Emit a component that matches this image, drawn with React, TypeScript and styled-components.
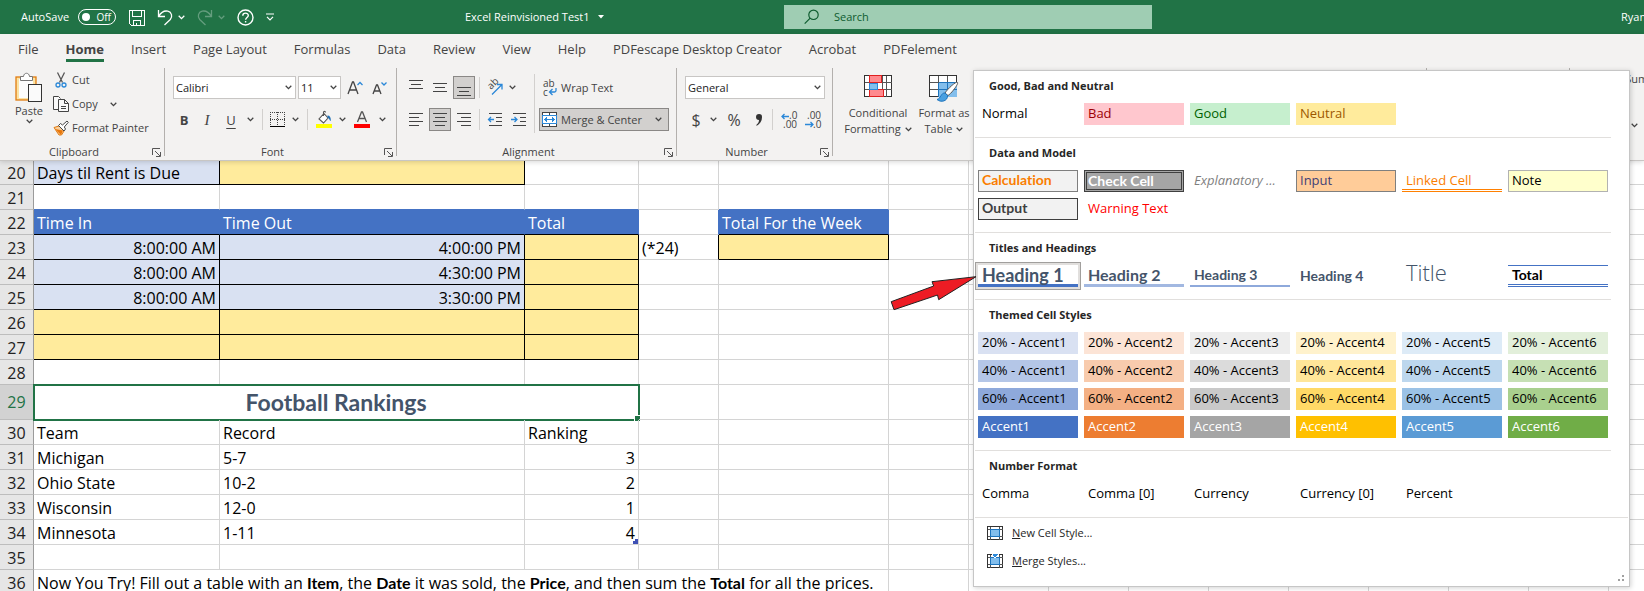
import React from 'react';
import styled, { createGlobalStyle, css } from 'styled-components';

const UI = "'Open Sans', 'Noto Sans', sans-serif";
const STRONG = "Lato, 'Open Sans', sans-serif";
const GREEN = '#217346';
const INK = '#444444';
const BLUE = '#2b88d8';

const GlobalStyle = createGlobalStyle`
  *, *::before, *::after { box-sizing: border-box; }
  body { margin: 0; overflow: hidden; background: #fff; }
  button { font: inherit; color: inherit; background: none; border: 0; padding: 0; margin: 0; }
  svg { flex: none; overflow: visible; }
`;

const Workbook = styled.div`
  position: relative;
  display: flex;
  flex-direction: column;
  height: 100vh;
  overflow: hidden;
  font: 11px/16px ${UI};
  color: ${INK};
`;

/* ---------- title bar ---------- */

const TitleBar = styled.header`
  display: grid;
  grid-template-columns: 465fr 319fr 368fr 492fr;
  align-items: center;
  height: 34px;
  background: ${GREEN};
  color: #fff;
`;

const QuickAccess = styled.div`
  display: flex;
  align-items: center;
  gap: 12px;
  padding-left: 21px;
`;

const AutoSave = styled.label`
  display: flex;
  align-items: center;
  width: 95px;
  justify-content: space-between;
`;

const Switch = styled.span`
  position: relative;
  display: flex;
  width: 38px;
  height: 16px;
`;

const SwitchInput = styled.input`
  appearance: none;
  margin: 0;
  width: 38px;
  height: 16px;
  border: 1px solid #fff;
  border-radius: 8px;
  &::before {
    content: '';
    display: block;
    width: 8px;
    height: 8px;
    margin: 3px;
    border-radius: 50%;
    background: #fff;
  }
`;

const SwitchState = styled.span`
  position: absolute;
  right: 5px;
  top: 0;
  font-size: 10px;
`;

const IconButton = styled.button<{ $dim?: boolean }>`
  display: flex;
  align-items: center;
  gap: 5px;
  opacity: ${(p) => (p.$dim ? 0.3 : 1)};
`;

const DocTitle = styled.button`
  display: flex;
  align-items: center;
  gap: 8px;
`;

const SearchBox = styled.label`
  display: flex;
  align-items: center;
  gap: 14px;
  height: 24px;
  padding-left: 20px;
  background: #9fcdb3;
  color: #0e5c2f;
`;

const SearchInput = styled.input`
  flex: 1;
  min-width: 0;
  border: 0;
  padding: 0;
  background: none;
  font: 11px/16px ${UI};
  &::placeholder { color: #0e5c2f; opacity: 1; }
`;

const Account = styled.button`
  justify-self: end;
  width: 23px;
  overflow: hidden;
  text-align: left;
`;

/* ---------- ribbon ---------- */

const Ribbon = styled.section`
  position: relative;
  z-index: 1;
  background: #f3f2f1;
  border-bottom: 1px solid #c8c6c4;
  box-shadow: 0 1px 5px rgba(0, 0, 0, 0.16);
`;

const Tabs = styled.nav`
  display: flex;
  align-items: flex-start;
  gap: 27px;
  height: 34px;
  padding-left: 18px;
`;

const Tab = styled.button<{ $active?: boolean }>`
  height: 28px;
  padding-top: 6px;
  line-height: 19px;
  white-space: nowrap;
  font-size: 13px;
  font-weight: ${(p) => (p.$active ? 700 : 400)};
  border-bottom: 3px solid ${(p) => (p.$active ? GREEN : 'transparent')};
`;

const Groups = styled.div`
  display: flex;
  height: 92px;
`;

const Group = styled.div<{ $width?: number }>`
  display: flex;
  flex-direction: column;
  min-width: 0;
  ${(p) => (p.$width ? css`flex: 0 0 ${p.$width}px;` : css`flex: 1 1 0;`)}
`;

const GroupBody = styled.div`
  display: flex;
  flex: 1;
  padding-left: 8px;
`;

const Caption = styled.div`
  display: flex;
  justify-content: center;
  position: relative;
  height: 16px;
  padding-right: 16px;
`;

const Launcher = styled.button`
  position: absolute;
  right: 3px;
  top: 4px;
  display: flex;
`;

const Divider = styled.span`
  flex: 0 0 1px;
  height: 88px;
  background: #b3b0ad;
`;

const PasteButton = styled.button`
  display: flex;
  flex-direction: column;
  align-items: center;
  width: 42px;
  padding-top: 3px;
`;

const Stack = styled.div`
  display: flex;
  flex-direction: column;
  margin-left: 3px;
`;

const ListButton = styled.button`
  display: flex;
  align-items: center;
  gap: 3px;
  height: 24px;
  white-space: nowrap;
`;

const Spacer = styled.span`
  width: 6px;
`;

const Rows = styled.div`
  display: flex;
  flex-direction: column;
  gap: 9px;
  padding-top: 8px;
`;

const ToolRow = styled.div<{ $gap?: number }>`
  display: flex;
  align-items: center;
  gap: ${(p) => p.$gap ?? 0}px;
  height: 23px;
`;

const Tool = styled.button<{ $w: number; $on?: boolean }>`
  display: flex;
  align-items: center;
  justify-content: center;
  flex: none;
  width: ${(p) => p.$w}px;
  height: 23px;
  border: 1px solid ${(p) => (p.$on ? '#8a8886' : 'transparent')};
  background: ${(p) => (p.$on ? '#d2d0ce' : 'none')};
`;

const Letter = styled.span<{ $bold?: boolean; $italic?: boolean; $underline?: boolean; $size?: number }>`
  font-size: ${(p) => p.$size ?? 13}px;
  line-height: 16px;
  font-weight: ${(p) => (p.$bold ? 700 : 400)};
  font-family: ${(p) => (p.$italic ? "'Liberation Serif', serif" : UI)};
  font-style: ${(p) => (p.$italic ? 'italic' : 'normal')};
  text-decoration: ${(p) => (p.$underline ? 'underline' : 'none')};
  text-underline-offset: 3px;
`;

const Line = styled.span<{ $m?: number }>`
  width: 1px;
  height: 21px;
  margin: 0 ${(p) => p.$m ?? 5}px;
  background: #d2d0ce;
`;

const TallLine = styled.span`
  width: 1px;
  height: 59px;
  margin: 6px 4px 0;
  background: #d2d0ce;
`;

const Combo = styled.span<{ $w: number }>`
  position: relative;
  display: flex;
  width: ${(p) => p.$w}px;
  height: 23px;
  svg { position: absolute; right: 4px; top: 9px; pointer-events: none; }
`;

const ComboSelect = styled.select`
  appearance: none;
  width: 100%;
  height: 23px;
  padding: 0 2px;
  border: 1px solid #c8c6c4;
  border-radius: 0;
  background: #fff;
  color: #222;
  font: 11px/16px ${UI};
`;

const TextButton = styled.button<{ $on?: boolean }>`
  display: flex;
  align-items: center;
  gap: 3px;
  width: 130px;
  height: 23px;
  padding: 0 6px 0 2px;
  white-space: nowrap;
  border: 1px solid ${(p) => (p.$on ? '#8a8886' : 'transparent')};
  background: ${(p) => (p.$on ? '#d2d0ce' : 'none')};
  svg:last-child { margin-left: ${(p) => (p.$on ? 'auto' : '0')}; }
`;

const BigButton = styled.button<{ $w: number }>`
  display: flex;
  flex-direction: column;
  align-items: center;
  justify-content: flex-start;
  width: ${(p) => p.$w}px;
  padding-top: 7px;
  white-space: nowrap;
`;

const BigIcon = styled.span`
  display: flex;
  height: 30px;
`;

const BigLine = styled.span`
  display: flex;
  align-items: center;
  gap: 4px;
`;

const Editing = styled.div`
  display: flex;
  flex-direction: column;
  align-items: flex-start;
  gap: 27px;
  padding: 3px 0 0 31px;
`;

/* ---------- worksheet ---------- */

const SheetArea = styled.main`
  flex: 1;
  min-height: 0;
  overflow: hidden;
`;

const Table = styled.table`
  table-layout: fixed;
  width: 1689px;
  border-collapse: separate;
  border-spacing: 0;
  font: 16px/21px ${UI};
  color: #000;
  b { font-family: ${STRONG}; }
`;

const RowHead = styled.th<{ $active?: boolean }>`
  padding: 0;
  vertical-align: ${(p) => (p.$active ? 'middle' : 'bottom')};
  font-weight: 400;
  color: ${(p) => (p.$active ? GREEN : '#222')};
  background: ${(p) => (p.$active ? '#d2d2d2' : '#e6e6e6')};
  border-right: 1px solid #9b9b9b;
  border-bottom: 1px solid #bdbdbd;
`;

type CellLook = { bg?: string; r?: string; b?: string; color?: string; align?: 'left' | 'right' | 'center' };

const Cell = styled.td<{ $look: CellLook }>`
  position: relative;
  padding: 0 3px;
  vertical-align: bottom;
  white-space: nowrap;
  background: ${(p) => p.$look.bg ?? 'none'};
  color: ${(p) => p.$look.color ?? '#000'};
  text-align: ${(p) => p.$look.align ?? 'left'};
  border-right: 1px solid ${(p) => p.$look.r ?? '#d4d4d4'};
  border-bottom: 1px solid ${(p) => p.$look.b ?? '#d4d4d4'};
`;

const SelectedCell = styled(Cell)`
  outline: 2px solid ${GREEN};
  outline-offset: -1px;
  font: 700 23px/32px ${STRONG};
  vertical-align: middle;
`;

const FillHandle = styled.span`
  position: absolute;
  right: -3px;
  bottom: -3px;
  width: 7px;
  height: 7px;
  border: 1px solid #fff;
  background: ${GREEN};
`;

const TableCorner = styled.span`
  position: absolute;
  right: 0;
  bottom: 0;
  width: 5px;
  height: 5px;
  border: solid #3f51b5;
  border-width: 0 3px 3px 0;
`;

/* ---------- cell styles gallery ---------- */

const Gallery = styled.aside`
  position: absolute;
  z-index: 2;
  top: 70px;
  right: 14px;
  width: 657px;
  background: #fff;
  border: 1px solid #c6c6c6;
  box-shadow: 1px 1px 5px rgba(0, 0, 0, 0.18);
  color: #262626;
`;

const Section = styled.section`
  margin: 0 18px 0 1px;
  padding: 0 3px 12px;
  border-bottom: 1px solid #e1dfdd;
`;

const LastSection = styled(Section)`
  margin-right: 1px;
`;

const SectionTitle = styled.h2`
  margin: 0;
  padding: 7px 0 9px 11px;
  font: 700 11px/16px ${UI};
`;

const Swatches = styled.div`
  display: grid;
  grid-template-columns: repeat(6, 100px);
  grid-auto-rows: 22px;
  gap: 6px;
`;

type SwatchLook = {
  bg?: string; color?: string; bold?: boolean; italic?: boolean; light?: boolean; size?: number;
  border?: string; top?: string; bottom?: string; hover?: boolean;
};

const Swatch = styled.button<{ $look: SwatchLook }>`
  display: flex;
  align-items: ${(p) => (p.$look.light ? 'flex-start' : 'center')};
  padding: 0 4px ${(p) => (p.$look.bold || p.$look.bottom ? 0 : 2)}px;
  white-space: nowrap;
  text-align: left;
  font-family: ${(p) => (p.$look.bold ? STRONG : UI)};
  line-height: ${(p) => (p.$look.light ? 15 : 18)}px;
  font-size: ${(p) => p.$look.size ?? (p.$look.bold ? 14 : 13)}px;
  font-weight: ${(p) => (p.$look.bold ? 700 : p.$look.light ? 300 : 400)};
  font-style: ${(p) => (p.$look.italic ? 'italic' : 'normal')};
  font-variant-ligatures: none;
  background: ${(p) => p.$look.bg ?? 'none'};
  color: ${(p) => p.$look.color ?? '#000'};
  ${(p) => p.$look.border && css`border: ${p.$look.border}; padding: 0 3px 2px;`}
  ${(p) => p.$look.border?.includes('double') && css`padding: 0 1px;`}
  ${(p) => p.$look.top && css`border-top: ${p.$look.top};`}
  ${(p) => p.$look.bottom && css`border-bottom: ${p.$look.bottom};`}
  ${(p) => p.$look.hover && css`box-shadow: 0 0 0 2px #e1dfdd, 0 0 0 3px #a19f9d;`}
`;

const Commands = styled.div`
  display: flex;
  flex-direction: column;
  padding: 1px 0 11px 13px;
`;

const Command = styled.button`
  display: flex;
  align-items: center;
  gap: 8px;
  height: 28px;
`;

const ResizeGrip = styled.span`
  position: absolute;
  right: 3px;
  bottom: 3px;
  display: flex;
`;

const Pointer = styled.svg`
  position: absolute;
  left: -84px;
  top: 204px;
`;

/* ---------- icons ---------- */

const Chevron = () => (
  <svg width="7" height="5" viewBox="0 0 7 5" fill="none" stroke="currentColor" strokeWidth="1.3">
    <path d="M.7.8 3.5 3.6 6.3.8" />
  </svg>
);

const SaveIcon = () => (
  <svg width="17" height="17" fill="none" stroke="#fff" shapeRendering="crispEdges">
    <path d="M1.500 1.500h15v15h-13l-2-2zM4.500 1.500v6h9v-6M5.500 16.500v-5h7v5M8.500 14v2.500" />
  </svg>
);
const UndoIcon = () => (
  <svg width="16" height="17" fill="none" stroke="#fff" strokeWidth="1.300">
    <path d="M1.500 1v6.500H8M1.800 7.200C4 3.500 7.500 1.500 10.800 2.200c4 .9 5 5.500 2.500 8.300L7.500 16" />
  </svg>
);
const RedoIcon = () => (
  <svg width="16" height="17" fill="none" stroke="#fff" strokeWidth="1.300">
    <path d="M14.500 1v6.500H8M14.200 7.200C12 3.500 8.500 1.500 5.200 2.200c-4 .9-5 5.500-2.500 8.300L8.500 16" />
  </svg>
);
const HelpIcon = () => (
  <svg width="17" height="17" fill="none" stroke="#fff" strokeWidth="1.400">
    <circle cx="8.500" cy="8.500" r="7.500" />
    <path d="M5.800 6.700c0-3.400 5.500-3.400 5.500-.2 0 2-2.700 2-2.700 4.300M8.600 12v1.600" />
  </svg>
);
const CustomizeIcon = () => (
  <svg width="8" height="8" fill="none" stroke="#fff" strokeWidth="1.200">
    <path d="M0 1h8M1 3.800l3 3 3-3" />
  </svg>
);
const SearchIcon = () => (
  <svg width="16" height="16" fill="none" stroke="#0e5c2f" strokeWidth="1.200">
    <circle cx="9.500" cy="5.800" r="4.700" />
    <path d="M6.200 9.200.7 14.700" />
  </svg>
);
const CaretIcon = () => (
  <svg width="6" height="4"><path d="M0 0h6L3 3.500z" fill="#fff" /></svg>
);
const LaunchIcon = () => (
  <svg width="9" height="9" fill="none" stroke="#555">
    <path d="M.5 7V.500H8M3 3l5 5M8.500 4v4.500H4" />
  </svg>
);
const PasteIcon = () => (
  <svg width="28" height="32">
    <rect x="1" y="6" width="20" height="23" fill="#fbe3a4" stroke="#e07b10" strokeWidth="1.300" />
    <rect x="4" y="8" width="14" height="19" fill="#fdfdfd" />
    <path d="M5.500 9.500v-4h3c.3-4.300 5.700-4.300 6 0h3v4z" fill="#fff" stroke="#767676" />
    <rect x="13.500" y="13.500" width="13" height="17" fill="#fafafa" stroke="#333" />
  </svg>
);
const CutIcon = () => (
  <svg width="16" height="18" fill="none">
    <path d="M4.500 1.500l5 10M11.500 1.500l-5 10" stroke="#555" strokeWidth="1.300" />
    <circle cx="5" cy="14" r="2" stroke={BLUE} strokeWidth="1.300" />
    <circle cx="11" cy="14" r="2" stroke={BLUE} strokeWidth="1.300" />
  </svg>
);
const CopyIcon = () => (
  <svg width="16" height="18" fill="#fafafa" stroke="#444">
    <path d="M5 14.500H.5v-13h5l2 2" />
    <path d="M5.500 4.500h6l4 4v8h-10zM11.500 4.500v4h4M8 11.500h5M8 13.500h5" />
  </svg>
);
const PainterIcon = () => (
  <svg width="16" height="16">
    <path d="M1 7.500l5-1.500 5 5-2.500 4L6 15z" fill="#f9cf9c" stroke="#e07b10" />
    <path d="M2 9l8 1.500-2 4.500z" fill="#e8770c" />
    <path d="M5.500 5.500l2-2 2 1.500 4.500-4 1.300 1.300-4 4.700 1.200 2-1.500 2z" fill="#fff" stroke="#444" />
  </svg>
);
const BordersIcon = () => (
  <svg width="16" height="16" fill="none" stroke="#444" shapeRendering="crispEdges">
    <path strokeDasharray="1 1" d="M0 .5h15M.5 0v14M14.500 0v14M7.500 0v14M0 7.500h15" />
    <path stroke="#000" d="M0 14.500h15" />
  </svg>
);
const FillIcon = () => (
  <svg width="16" height="18">
    <path d="M8 2.500l4 4.500-4.500 5L3 8zM7.500 5V1.500c0-1.500 2-1.500 2 0" fill="#fff" stroke="#555" strokeWidth="1.100" />
    <path d="M11.500 4.500c2.500 0 3.500 2 3.300 5.500-1.300-.3-1.600-3-3.300-3.500z" fill="#1f6fb5" />
    <rect y="13" width="16" height="4" fill="#ff0" />
  </svg>
);
const FontColorIcon = () => (
  <svg width="16" height="18">
    <path d="M3.500 11L7.500 1h1L12.500 11M5 7.500h6" fill="none" stroke="#555" strokeWidth="1.300" />
    <rect y="13" width="16" height="4" fill="#f00" />
  </svg>
);
const GrowIcon = ({ small }: { small?: boolean }) => (
  <svg width="16" height="16" fill="none" strokeWidth="1.300">
    <path d={small ? 'M1 14L4.500 5h1L9 14M2.300 11h5.500' : 'M1 14L5.500 2h1L11 14M2.500 10h7'} stroke="#444" />
    <path d={small ? 'M9.500 2.500L12 5l2.500-2.500' : 'M10.500 5L13 2.500 15.500 5'} stroke={BLUE} />
  </svg>
);

const lineSets = {
  top: [[0, 14, 1], [2, 12, 5], [0, 14, 9]],
  middle: [[0, 14, 4], [2, 12, 8], [0, 14, 12]],
  bottom: [[0, 14, 8], [2, 12, 12], [0, 14, 16]],
  left: [[0, 14, 2], [0, 10, 6], [0, 14, 10], [0, 10, 14]],
  center: [[0, 14, 2], [2, 12, 6], [0, 14, 10], [2, 12, 14]],
  right: [[0, 14, 2], [4, 14, 6], [0, 14, 10], [4, 14, 14]],
};
const LinesIcon = ({ kind }: { kind: keyof typeof lineSets }) => (
  <svg width="14" height="18" stroke="#444" shapeRendering="crispEdges">
    {lineSets[kind].map(([a, b, y]) => (
      <path key={y} d={`M${a} ${y}.5H${b}`} />
    ))}
  </svg>
);
const IndentIcon = ({ out }: { out?: boolean }) => (
  <svg width="16" height="16" fill="none">
    <path d="M2 1.500h13M9 5.500h6M9 9.500h6M2 13.500h13" stroke="#444" shapeRendering="crispEdges" />
    <path d={out ? 'M7 7.500H1.500M4 5L1.500 7.500 4 10' : 'M0 7.500h6M3.500 5L6 7.500 3.500 10'} stroke={BLUE} strokeWidth="1.300" />
  </svg>
);
const TinyText = styled.text`
  font: 10px/10px ${UI};
  fill: #444;
`;
const OrientationIcon = () => (
  <svg width="18" height="18" fill="none">
    <TinyText transform="translate(5 11) rotate(-45)">ab</TinyText>
    <path d="M6 15.500L15.500 6M11 5.500h5v5" stroke={BLUE} strokeWidth="1.300" />
  </svg>
);
const WrapIcon = () => (
  <svg width="16" height="18" fill="none">
    <TinyText x="1" y="8">ab</TinyText>
    <TinyText x="1" y="17">c</TinyText>
    <path d="M14 9v2.500q0 1.500-1.500 1.500H8M10.500 10L7.500 13l3 3" stroke={BLUE} strokeWidth="1.300" />
  </svg>
);
const MergeIcon = () => (
  <svg width="16" height="16" fill="none" shapeRendering="crispEdges">
    <path d="M.5.500h14v14H.500zM7.500.500v3M7.500 11.500v3" stroke="#444" fill="#fff" />
    <path d="M.5 3.500h14v8H.500z" stroke={BLUE} fill="#fff" />
    <path d="M3 7.500h9M5 5.500L3 7.500l2 2M10 5.500l2 2-2 2" stroke={BLUE} strokeWidth="1.200" />
  </svg>
);
const DecimalIcon = ({ less }: { less?: boolean }) => (
  <svg width="17" height="18" fill="none">
    <TinyText x={less ? 2 : 8} y="8">{less ? '.00' : '.0'}</TinyText>
    <TinyText x={less ? 8 : 2} y="17">{less ? '.0' : '.00'}</TinyText>
    <path
      d={less ? 'M0 13.500h8M5.500 11L8 13.500 5.500 16' : 'M8 5.500H1M3.500 3L1 5.500 3.500 8'}
      stroke={BLUE}
      strokeWidth="1.300"
    />
  </svg>
);
const CondIcon = () => (
  <svg width="29" height="24" fill="none" shapeRendering="crispEdges">
    <path d="M.5.500h27v21H.500z" fill="#fff" stroke="#333" />
    <path d="M.5 7.500h27M.5 14.500h27M5.500.500v21M18.500.500v21M22.500.500v21" stroke="#555" />
    <path d="M5.500.500h12v7h-12zM5.500 14.500h14v7h-14z" fill="#ff8a8e" stroke="#e02020" />
    <path d="M5.500 8.500h8v6h-8z" fill="#83beec" stroke={BLUE} />
  </svg>
);
const FormatTableIcon = () => (
  <svg width="30" height="28" fill="none">
    <g shapeRendering="crispEdges">
      <path d="M.5.500h27v21H.500z" fill="#fff" stroke="#333" />
      <path d="M9.500 7.500h18v14h-18z" fill="#83beec" />
      <path d="M.5 7.500h27M.5 14.500h27M9.500.500v21M18.500.500v21" stroke="#555" />
      <path d="M9.500 7.500h18M9.500 14.500h18M9.500 7.500v14M18.500 7.500v14" stroke="#1e74bd" />
    </g>
    <path d="M28.500 7.500c1.500.8-6 11-9.500 13l-3-2.500c3-4.500 11-12 12.500-10.500z" fill="#fff" stroke="#555" />
    <path d="M16 18c-4-.5-4 5.500-8 6.500 4 3.500 11 1.500 10.500-4z" fill="#4aa0e0" stroke="#1e74bd" />
  </svg>
);
const StyleIcon = ({ merge }: { merge?: boolean }) => (
  <svg width="17" height="16" fill="none" shapeRendering="crispEdges">
    <path d="M.5 1.500h15v13H.500z" fill="#fff" stroke="#333" />
    <path d="M.5 4.500h15M.5 11.500h15M3.500 1.500v13M12.500 1.500v13" stroke="#555" />
    <path d="M3.500 4.500h9v7h-9z" fill="#83beec" stroke="#1e74bd" />
    {merge && <path d="M5 0h6v2L8 5 5 2z" fill="#2b88d8" stroke="#fff" />}
  </svg>
);
const GripIcon = () => (
  <svg width="9" height="9" fill="#a0a0a0" shapeRendering="crispEdges">
    <path d="M5 1h2v2H5zM5 5h2v2H5zM1 5h2v2H1z" />
  </svg>
);

/* ---------- data ---------- */

const tabs = ['File', 'Home', 'Insert', 'Page Layout', 'Formulas', 'Data', 'Review', 'View', 'Help',
  'PDFescape Desktop Creator', 'Acrobat', 'PDFelement'];

const pale = '#d9e1f2';
const gold = '#ffeb9c';
const head = '#4472c4';
const black = '#000';

type CellData = { text?: React.ReactNode; span?: number; selected?: boolean; corner?: boolean } & CellLook;
const blank: CellData = {};
const timeRow = (n: number, a: string, b: string, e: CellData = blank, f: CellData = blank) => ({
  n,
  cells: [
    { text: a, bg: a ? pale : gold, r: black, b: black, align: 'right' as const },
    { text: b, bg: a ? pale : gold, r: black, b: black, align: 'right' as const },
    { bg: gold, r: black, b: black },
    e,
    f,
  ] as CellData[],
});
const teamRow = (n: number, a: string, b: string, c: string, last?: boolean) => ({
  n,
  cells: [{ text: a }, { text: b }, { text: c, align: 'right' as const, corner: last }] as CellData[],
});

const rows: { n: number; h?: number; cells: CellData[] }[] = [
  { n: 20, h: 24, cells: [{ text: 'Days til Rent is Due', bg: pale, r: black, b: black }, { bg: gold, r: black, b: black }] },
  { n: 21, cells: [{ b: head }, { b: head }, { b: head }, blank, { b: head }] },
  {
    n: 22,
    cells: [
      { text: 'Time In', bg: head, r: head, b: black, color: '#fff' },
      { text: 'Time Out', bg: head, r: head, b: black, color: '#fff' },
      { text: 'Total', bg: head, r: head, b: black, color: '#fff' },
      { r: head },
      { text: 'Total For the Week', bg: head, r: head, b: black, color: '#fff' },
    ],
  },
  timeRow(23, '8:00:00 AM', '4:00:00 PM', { text: '(*24)', r: black }, { bg: gold, r: black, b: black }),
  timeRow(24, '8:00:00 AM', '4:30:00 PM'),
  timeRow(25, '8:00:00 AM', '3:30:00 PM'),
  timeRow(26, '', ''),
  timeRow(27, '', ''),
  { n: 28, cells: [] },
  { n: 29, h: 35, cells: [{ text: 'Football Rankings', span: 3, selected: true, color: '#44546a', align: 'center' }] },
  { n: 30, cells: [{ text: 'Team' }, { text: 'Record' }, { text: 'Ranking' }] },
  teamRow(31, 'Michigan', '5-7', '3'),
  teamRow(32, 'Ohio State', '10-2', '2'),
  teamRow(33, 'Wisconsin', '12-0', '1'),
  teamRow(34, 'Minnesota', '1-11', '4', true),
  { n: 35, cells: [] },
  {
    n: 36,
    cells: [{
      span: 5,
      text: (
        <>
          Now You Try! Fill out a table with an <b>Item</b>, the <b>Date</b> it was sold, the <b>Price</b>, and then
          sum the <b>Total</b> for all the prices.
        </>
      ),
    }],
  },
];

const colWidths = [34, 186, 305, 114, 80, 170, 80, 80, 80, 80, 80, 80, 80, 80, 80, 80];

const slate = '#44546a';
const sections: { title: string; items: ({ label: string } & SwatchLook)[] }[] = [
  {
    title: 'Good, Bad and Neutral',
    items: [
      { label: 'Normal' },
      { label: 'Bad', bg: '#ffc7ce', color: '#9c0006' },
      { label: 'Good', bg: '#c6efce', color: '#006100' },
      { label: 'Neutral', bg: '#ffeb9c', color: '#9c5700' },
    ],
  },
  {
    title: 'Data and Model',
    items: [
      { label: 'Calculation', bg: '#f2f2f2', color: '#fa7d00', bold: true, border: '1px solid #7f7f7f' },
      { label: 'Check Cell', bg: '#a5a5a5', color: '#fff', bold: true, border: '3px double #3f3f3f' },
      { label: 'Explanatory ...', color: '#7f7f7f', italic: true },
      { label: 'Input', bg: '#ffcc99', color: '#3f3f76', border: '1px solid #7f7f7f' },
      { label: 'Linked Cell', color: '#fa7d00', bottom: '3px double #ff8001' },
      { label: 'Note', bg: '#ffffcc', border: '1px solid #b2b2b2' },
      { label: 'Output', bg: '#f2f2f2', color: '#3f3f3f', bold: true, border: '1px solid #3f3f3f' },
      { label: 'Warning Text', color: '#ff0000' },
    ],
  },
  {
    title: 'Titles and Headings',
    items: [
      { label: 'Heading 1', color: slate, bold: true, size: 18, bottom: '3px solid #4472c4', hover: true },
      { label: 'Heading 2', color: slate, bold: true, size: 16, bottom: '3px solid #a2b8e1' },
      { label: 'Heading 3', color: slate, bold: true, bottom: '2px solid #8ea9db' },
      { label: 'Heading 4', color: slate, bold: true },
      { label: 'Title', color: slate, light: true, size: 22 },
      { label: 'Total', bold: true, top: '1px solid #4472c4', bottom: '3px double #4472c4' },
    ],
  },
  {
    title: 'Themed Cell Styles',
    items: [
      ['20% - ', ['#d9e1f2', '#fce4d6', '#ededed', '#fff2cc', '#ddebf7', '#e2efda']],
      ['40% - ', ['#b4c6e7', '#f8cbad', '#dbdbdb', '#ffe699', '#bdd7ee', '#c6e0b4']],
      ['60% - ', ['#8ea9db', '#f4b084', '#c9c9c9', '#ffd966', '#9bc2e6', '#a9d08e']],
      ['', ['#4472c4', '#ed7d31', '#a5a5a5', '#ffc000', '#5b9bd5', '#70ad47']],
    ].flatMap(([prefix, colors]) =>
      (colors as string[]).map((bg, i) => ({
        label: `${prefix}Accent${i + 1}`,
        bg,
        color: prefix ? '#000' : '#fff',
      })),
    ),
  },
  {
    title: 'Number Format',
    items: ['Comma', 'Comma [0]', 'Currency', 'Currency [0]', 'Percent'].map((label) => ({ label })),
  },
];

/* ---------- views ---------- */

const Footer = ({ children }: { children: string }) => (
  <Caption>
    {children}
    <Launcher aria-label={`${children} settings`}><LaunchIcon /></Launcher>
  </Caption>
);

const SheetRow = ({ row }: { row: (typeof rows)[number] }) => {
  const used = row.cells.reduce((sum, c) => sum + (c.span ?? 1), 0);
  const all = [...row.cells, ...Array.from({ length: colWidths.length - 1 - used }, () => blank)];
  return (
    <tr style={{ height: row.h ?? 25 }}>
      <RowHead scope="row" $active={row.n === 29}>{row.n}</RowHead>
      {all.map((c, i) => {
        const { text, span, selected, corner, ...look } = c;
        const Kind = selected ? SelectedCell : Cell;
        return (
          <Kind key={i} colSpan={span} $look={look}>
            {text}
            {selected && <FillHandle />}
            {corner && <TableCorner />}
          </Kind>
        );
      })}
    </tr>
  );
};

export default function App() {
  return (
    <Workbook>
      <GlobalStyle />
      <TitleBar>
        <QuickAccess>
          <AutoSave>
            AutoSave
            <Switch>
              <SwitchInput type="checkbox" aria-label="AutoSave" />
              <SwitchState>Off</SwitchState>
            </Switch>
          </AutoSave>
          <IconButton aria-label="Save"><SaveIcon /></IconButton>
          <IconButton aria-label="Undo"><UndoIcon /><Chevron /></IconButton>
          <IconButton aria-label="Redo" $dim><RedoIcon /><Chevron /></IconButton>
          <IconButton aria-label="Help"><HelpIcon /></IconButton>
          <IconButton aria-label="Customize toolbar"><CustomizeIcon /></IconButton>
        </QuickAccess>
        <DocTitle>Excel Reinvisioned Test1 <CaretIcon /></DocTitle>
        <SearchBox>
          <SearchIcon />
          <SearchInput type="search" placeholder="Search" aria-label="Search" />
        </SearchBox>
        <Account>Ryan</Account>
      </TitleBar>

      <Ribbon>
        <Tabs>
          {tabs.map((t) => <Tab key={t} $active={t === 'Home'}>{t}</Tab>)}
        </Tabs>
        <Groups>
          <Group $width={164}>
            <GroupBody>
              <PasteButton><PasteIcon /><span>Paste</span><Chevron /></PasteButton>
              <Stack>
                <ListButton><CutIcon />Cut</ListButton>
                <ListButton><CopyIcon />Copy<Spacer /><Chevron /></ListButton>
                <ListButton><PainterIcon />Format Painter</ListButton>
              </Stack>
            </GroupBody>
            <Footer>Clipboard</Footer>
          </Group>
          <Divider />
          <Group $width={231}>
            <GroupBody>
              <Rows>
                <ToolRow $gap={2}>
                  <Combo $w={123}>
                    <ComboSelect aria-label="Font"><option>Calibri</option></ComboSelect>
                    <Chevron />
                  </Combo>
                  <Combo $w={43}>
                    <ComboSelect aria-label="Font size"><option>11</option></ComboSelect>
                    <Chevron />
                  </Combo>
                  <Tool $w={24} aria-label="Increase font size"><GrowIcon /></Tool>
                  <Tool $w={22} aria-label="Decrease font size"><GrowIcon small /></Tool>
                </ToolRow>
                <ToolRow>
                  <Tool $w={22}><Letter $bold>B</Letter></Tool>
                  <Tool $w={24}><Letter $italic $size={15}>I</Letter></Tool>
                  <Tool $w={24}><Letter $underline>U</Letter></Tool>
                  <Tool $w={14} aria-label="Underline options"><Chevron /></Tool>
                  <Line />
                  <Tool $w={20} aria-label="Borders"><BordersIcon /></Tool>
                  <Tool $w={14} aria-label="Border options"><Chevron /></Tool>
                  <Line />
                  <Tool $w={22} aria-label="Fill color"><FillIcon /></Tool>
                  <Tool $w={14} aria-label="Fill options"><Chevron /></Tool>
                  <Tool $w={26} aria-label="Font color"><FontColorIcon /></Tool>
                  <Tool $w={14} aria-label="Font color options"><Chevron /></Tool>
                </ToolRow>
              </Rows>
            </GroupBody>
            <Footer>Font</Footer>
          </Group>
          <Divider />
          <Group $width={279}>
            <GroupBody>
              <Rows>
                <ToolRow $gap={2}>
                  <Tool $w={22} aria-label="Top align"><LinesIcon kind="top" /></Tool>
                  <Tool $w={22} aria-label="Middle align"><LinesIcon kind="middle" /></Tool>
                  <Tool $w={22} $on aria-label="Bottom align"><LinesIcon kind="bottom" /></Tool>
                  <Line $m={2} />
                  <Tool $w={22} aria-label="Orientation"><OrientationIcon /></Tool>
                  <Tool $w={8} aria-label="Orientation options"><Chevron /></Tool>
                </ToolRow>
                <ToolRow $gap={2}>
                  <Tool $w={22} aria-label="Align left"><LinesIcon kind="left" /></Tool>
                  <Tool $w={22} $on aria-label="Center"><LinesIcon kind="center" /></Tool>
                  <Tool $w={22} aria-label="Align right"><LinesIcon kind="right" /></Tool>
                  <Line $m={2} />
                  <Tool $w={22} aria-label="Decrease indent"><IndentIcon out /></Tool>
                  <Tool $w={22} aria-label="Increase indent"><IndentIcon /></Tool>
                </ToolRow>
              </Rows>
              <TallLine />
              <Rows>
                <TextButton><WrapIcon />Wrap Text</TextButton>
                <TextButton $on><MergeIcon />Merge &amp; Center<Chevron /></TextButton>
              </Rows>
            </GroupBody>
            <Footer>Alignment</Footer>
          </Group>
          <Divider />
          <Group $width={155}>
            <GroupBody>
              <Rows>
                <Combo $w={140}>
                  <ComboSelect aria-label="Number format"><option>General</option></ComboSelect>
                  <Chevron />
                </Combo>
                <ToolRow $gap={2}>
                  <Tool $w={22}><Letter $size={16}>$</Letter></Tool>
                  <Tool $w={8} aria-label="Currency options"><Chevron /></Tool>
                  <Tool $w={30}><Letter $size={16}>%</Letter></Tool>
                  <Tool $w={16} aria-label="Comma style">
                    <svg width="8" height="14">
                      <path d="M4 1a3 3 0 0 1 3 3.200C7 8 5 11 1.500 13V11.800C3 10.500 4 9 4 7a3 3 0 0 1 0-6z" fill="#333" />
                    </svg>
                  </Tool>
                  <Line $m={3} />
                  <Tool $w={22} aria-label="Increase decimal"><DecimalIcon /></Tool>
                  <Tool $w={22} aria-label="Decrease decimal"><DecimalIcon less /></Tool>
                </ToolRow>
              </Rows>
            </GroupBody>
            <Footer>Number</Footer>
          </Group>
          <Divider />
          <Group>
            <GroupBody>
              <BigButton $w={74}>
                <BigIcon><CondIcon /></BigIcon>
                <BigLine>Conditional</BigLine>
                <BigLine>Formatting <Chevron /></BigLine>
              </BigButton>
              <BigButton $w={58}>
                <BigIcon><FormatTableIcon /></BigIcon>
                <BigLine>Format as</BigLine>
                <BigLine>Table <Chevron /></BigLine>
              </BigButton>
            </GroupBody>
          </Group>
          <Divider />
          <Group $width={142} />
          <Divider />
          <Group $width={74}>
            <Editing>
              <button>AutoSum</button>
              <Tool $w={66} aria-label="Clear options"><Chevron /></Tool>
            </Editing>
          </Group>
        </Groups>
      </Ribbon>

      <SheetArea>
        <Table>
          <colgroup>
            {colWidths.map((w, i) => <col key={i} style={{ width: w }} />)}
          </colgroup>
          <tbody>
            {rows.map((r) => <SheetRow key={r.n} row={r} />)}
          </tbody>
        </Table>
      </SheetArea>

      <Gallery>
        {sections.map((s, i) => {
          const Box = i === sections.length - 1 ? LastSection : Section;
          return (
            <Box key={s.title}>
              <SectionTitle>{s.title}</SectionTitle>
              <Swatches>
                {s.items.map(({ label, ...look }) => <Swatch key={label} $look={look}>{label}</Swatch>)}
              </Swatches>
            </Box>
          );
        })}
        <Commands>
          <Command><StyleIcon /><span><u>N</u>ew Cell Style...</span></Command>
          <Command><StyleIcon merge /><span><u>M</u>erge Styles...</span></Command>
        </Commands>
        <ResizeGrip><GripIcon /></ResizeGrip>
        <Pointer width="88" height="38" viewBox="889 275 88 38">
          <path
            d="M975 276.700L931 281.700 932.700 286 890.200 301.700 893 309.700 936.500 295 937.700 299.700z"
            fill="#ed1c24"
            stroke="#222"
          />
        </Pointer>
      </Gallery>
    </Workbook>
  );
}
